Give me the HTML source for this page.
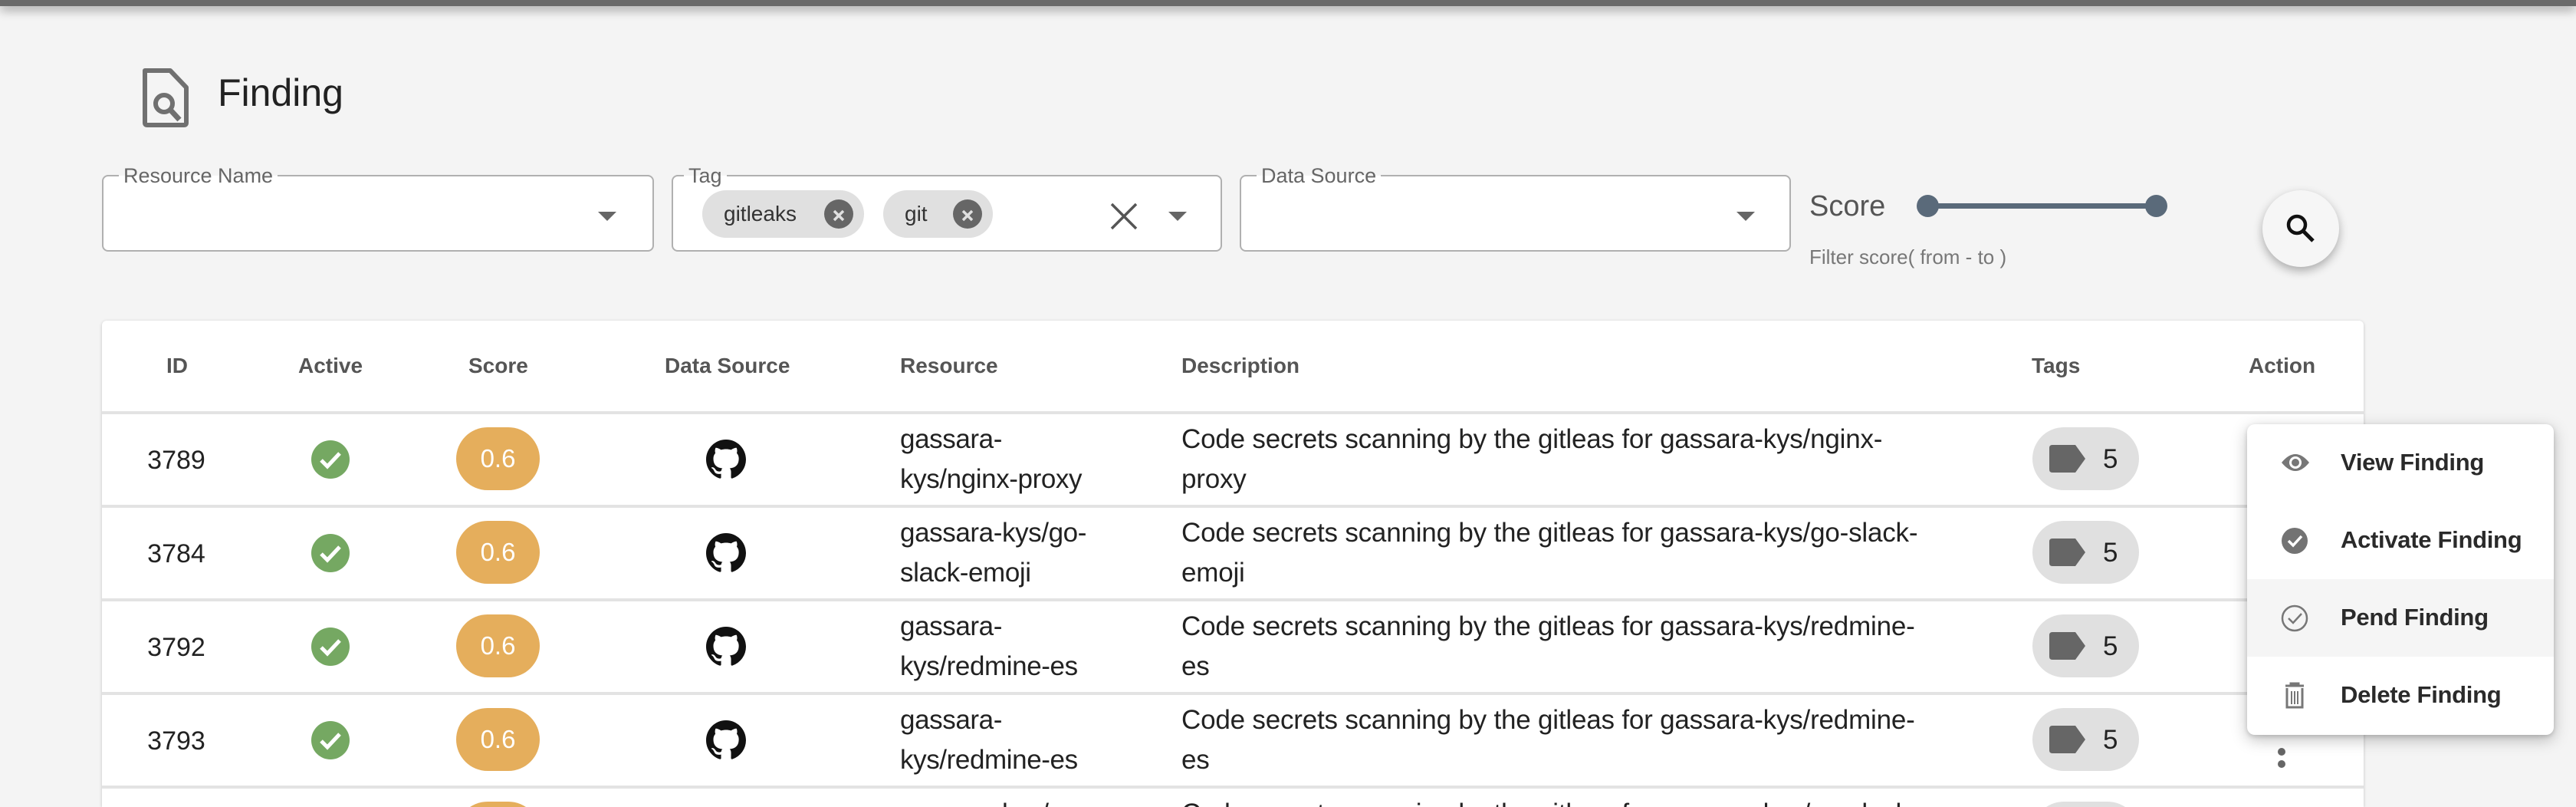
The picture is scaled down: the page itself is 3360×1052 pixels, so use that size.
<!DOCTYPE html>
<html style="width:3360px;height:1052px;overflow:hidden"><head><meta charset="utf-8"><style>
*{margin:0;padding:0;box-sizing:border-box}
body{width:3360px;height:1052px;overflow:hidden;background:#f4f4f4;font-family:"Liberation Sans",sans-serif;position:relative;color:#222}
.a{position:absolute}
.topbar{left:0;top:0;width:3360px;height:8px;background:#6a6a6a;box-shadow:0 4px 14px rgba(0,0,0,.45)}
.field{position:absolute;top:228px;height:100px;border:2px solid #b0b0b0;border-radius:8px;background:#fff}
.lbl{position:absolute;top:-17px;left:20px;background:linear-gradient(#f4f4f4 50%,#fff 50%);padding:0 6px;font-size:27px;color:#666;line-height:32px}
.arrow{position:absolute;width:0;height:0;border-left:12px solid transparent;border-right:12px solid transparent;border-top:12px solid #666}
.chip{position:absolute;top:18px;height:62px;border-radius:31px;background:#e0e0e0;font-size:28px;color:#333;line-height:62px;padding-left:28px}
.chip .x{position:absolute;right:14px;top:12px;width:38px;height:38px;border-radius:50%;background:#666}
.card{left:133px;top:418px;width:2950px;height:634px;background:#fff;box-shadow:0 1px 4px rgba(0,0,0,.2);border-radius:6px 6px 0 0;overflow:hidden}
.th{position:absolute;top:45px;font-size:28px;font-weight:bold;color:#555;line-height:1}
.hr{position:absolute;left:0;width:100%;height:4px;background:#e3e3e3}
.row{position:absolute;left:0;width:100%;height:122px}
.id{position:absolute;left:47px;width:100px;text-align:center;top:42px;font-size:34px;color:#222}
.chk{position:absolute;left:273px;top:35px;width:50px;height:50px}
.pill{position:absolute;left:462px;top:18px;width:109px;height:82px;border-radius:41px;background:#e5ae5c;color:#fff;font-size:33px;line-height:82px;text-align:center}
.gh{position:absolute;left:788px;top:34px;width:52px;height:52px}
.res,.desc{position:absolute;top:8px;font-size:35px;line-height:52px;color:#222;white-space:nowrap}
.res{left:1041px;letter-spacing:-.4px}.desc{left:1408px;letter-spacing:-.2px}
.tag{position:absolute;left:2518px;top:18px;width:139px;height:82px;border-radius:41px;background:#e0e0e0}
.tag svg{position:absolute;left:22px;top:23px}
.tag span{position:absolute;left:92px;top:22px;font-size:35px;color:#222}
.menu{left:2931px;top:553px;width:400px;height:405px;background:#fff;border-radius:10px;box-shadow:0 6px 20px rgba(0,0,0,.25),0 2px 6px rgba(0,0,0,.15)}
.mi{position:absolute;left:0;width:100%;height:101px}
.mi span{position:absolute;left:122px;top:32px;font-size:31px;font-weight:bold;color:#2a2a2a;letter-spacing:-.3px}
.mi svg{position:absolute;left:43px;top:32px}
</style></head><body>
<div class="a topbar"></div>

<svg class="a" style="left:184px;top:88px" width="64" height="78" viewBox="0 0 64 78"><path d="M5 4 H38 L59 26 V72 Q59 75 56 75 H8 Q5 75 5 72 Z" fill="none" stroke="#707070" stroke-width="6" stroke-linejoin="round"/><circle cx="30" cy="47" r="11" fill="none" stroke="#707070" stroke-width="6"/><path d="M38 55 L50 68" stroke="#707070" stroke-width="7"/></svg>
<div class="a" style="left:284px;top:92px;font-size:50px;color:#222">Finding</div>

<div class="field" style="left:133px;width:720px"><div class="lbl">Resource Name</div><div class="arrow" style="left:645px;top:46px"></div></div>
<div class="field" style="left:876px;width:718px"><div class="lbl" style="left:14px">Tag</div>
<div class="chip" style="left:38px;width:211px">gitleaks<div class="x"><svg width="38" height="38"><path d="M13 13L25 25M25 13L13 25" stroke="#e0e0e0" stroke-width="3.5"/></svg></div></div>
<div class="chip" style="left:274px;width:143px">git<div class="x"><svg width="38" height="38"><path d="M13 13L25 25M25 13L13 25" stroke="#e0e0e0" stroke-width="3.5"/></svg></div></div>
<svg style="position:absolute;left:569px;top:33px" width="38" height="38"><path d="M3 3L35 35M35 3L3 35" stroke="#555" stroke-width="3.5"/></svg>
<div class="arrow" style="left:646px;top:46px"></div></div>
<div class="field" style="left:1617px;width:719px"><div class="lbl">Data Source</div><div class="arrow" style="left:646px;top:46px"></div></div>

<div class="a" style="left:2360px;top:248px;font-size:38px;color:#555">Score</div>
<div class="a" style="left:2514px;top:265px;width:298px;height:7px;background:#5a6a7a"></div>
<div class="a" style="left:2500px;top:254px;width:29px;height:29px;border-radius:50%;background:#5a6a7a"></div>
<div class="a" style="left:2798px;top:254px;width:29px;height:29px;border-radius:50%;background:#5a6a7a"></div>
<div class="a" style="left:2360px;top:320px;font-size:26px;color:#777">Filter score( from - to )</div>
<div class="a" style="left:2951px;top:248px;width:100px;height:100px;border-radius:50%;background:#f6f6f6;box-shadow:0 5px 12px rgba(0,0,0,.3)"><svg style="position:absolute;left:30px;top:30px" width="40" height="40" viewBox="0 0 40 40"><circle cx="15" cy="15" r="11" fill="none" stroke="#111" stroke-width="4.5"/><path d="M23 23L36 36" stroke="#111" stroke-width="5"/></svg></div>

<div class="a card">
<div class="th" style="left:84px">ID</div>
<div class="th" style="left:256px">Active</div>
<div class="th" style="left:478px">Score</div>
<div class="th" style="left:734px">Data Source</div>
<div class="th" style="left:1041px">Resource</div>
<div class="th" style="left:1408px">Description</div>
<div class="th" style="left:2517px">Tags</div>
<div class="th" style="left:2800px">Action</div>
<div class="hr" style="top:118px"></div>

<div class="row" style="top:121px"><div class="id">3789</div><svg class="chk" viewBox="0 0 50 50"><circle cx="25" cy="25" r="25" fill="#75a862"/><path d="M13 26L21 34L37 17" fill="none" stroke="#fff" stroke-width="5"/></svg><div class="pill">0.6</div><svg class="gh" viewBox="0 0 16 16"><path fill="#111" d="M8 0C3.58 0 0 3.58 0 8c0 3.54 2.29 6.53 5.47 7.59.4.07.55-.17.55-.38 0-.19-.01-.82-.01-1.49-2.01.37-2.53-.49-2.69-.94-.09-.23-.48-.94-.82-1.13-.28-.15-.68-.52-.01-.53.63-.01 1.08.58 1.23.82.72 1.21 1.87.87 2.33.66.07-.52.28-.87.51-1.07-1.78-.2-3.64-.89-3.64-3.95 0-.87.31-1.59.82-2.15-.08-.2-.36-1.02.08-2.12 0 0 .67-.21 2.2.82.64-.18 1.32-.27 2-.27.68 0 1.36.09 2 .27 1.53-1.04 2.2-.82 2.2-.82.44 1.1.16 1.92.08 2.12.51.56.82 1.27.82 2.15 0 3.07-1.87 3.75-3.65 3.95.29.25.54.73.54 1.48 0 1.07-.01 1.93-.01 2.2 0 .21.15.46.55.38A8.013 8.013 0 0016 8c0-4.42-3.58-8-8-8z"/></svg><div class="res">gassara-<br>kys/nginx-proxy</div><div class="desc">Code secrets scanning by the gitleas for gassara-kys/nginx-<br>proxy</div><div class="tag"><svg width="48" height="36"><path d="M4 0H34L47 18L34 36H4Q0 36 0 32V4Q0 0 4 0Z" fill="#666"/></svg><span>5</span></div></div>
<div class="hr" style="top:240px"></div>

<div class="row" style="top:243px"><div class="id">3784</div><svg class="chk" viewBox="0 0 50 50"><circle cx="25" cy="25" r="25" fill="#75a862"/><path d="M13 26L21 34L37 17" fill="none" stroke="#fff" stroke-width="5"/></svg><div class="pill">0.6</div><svg class="gh" viewBox="0 0 16 16"><path fill="#111" d="M8 0C3.58 0 0 3.58 0 8c0 3.54 2.29 6.53 5.47 7.59.4.07.55-.17.55-.38 0-.19-.01-.82-.01-1.49-2.01.37-2.53-.49-2.69-.94-.09-.23-.48-.94-.82-1.13-.28-.15-.68-.52-.01-.53.63-.01 1.08.58 1.23.82.72 1.21 1.87.87 2.33.66.07-.52.28-.87.51-1.07-1.78-.2-3.64-.89-3.64-3.95 0-.87.31-1.59.82-2.15-.08-.2-.36-1.02.08-2.12 0 0 .67-.21 2.2.82.64-.18 1.32-.27 2-.27.68 0 1.36.09 2 .27 1.53-1.04 2.2-.82 2.2-.82.44 1.1.16 1.92.08 2.12.51.56.82 1.27.82 2.15 0 3.07-1.87 3.75-3.65 3.95.29.25.54.73.54 1.48 0 1.07-.01 1.93-.01 2.2 0 .21.15.46.55.38A8.013 8.013 0 0016 8c0-4.42-3.58-8-8-8z"/></svg><div class="res">gassara-kys/go-<br>slack-emoji</div><div class="desc">Code secrets scanning by the gitleas for gassara-kys/go-slack-<br>emoji</div><div class="tag"><svg width="48" height="36"><path d="M4 0H34L47 18L34 36H4Q0 36 0 32V4Q0 0 4 0Z" fill="#666"/></svg><span>5</span></div></div>
<div class="hr" style="top:362px"></div>

<div class="row" style="top:365px"><div class="id">3792</div><svg class="chk" viewBox="0 0 50 50"><circle cx="25" cy="25" r="25" fill="#75a862"/><path d="M13 26L21 34L37 17" fill="none" stroke="#fff" stroke-width="5"/></svg><div class="pill">0.6</div><svg class="gh" viewBox="0 0 16 16"><path fill="#111" d="M8 0C3.58 0 0 3.58 0 8c0 3.54 2.29 6.53 5.47 7.59.4.07.55-.17.55-.38 0-.19-.01-.82-.01-1.49-2.01.37-2.53-.49-2.69-.94-.09-.23-.48-.94-.82-1.13-.28-.15-.68-.52-.01-.53.63-.01 1.08.58 1.23.82.72 1.21 1.87.87 2.33.66.07-.52.28-.87.51-1.07-1.78-.2-3.64-.89-3.64-3.95 0-.87.31-1.59.82-2.15-.08-.2-.36-1.02.08-2.12 0 0 .67-.21 2.2.82.64-.18 1.32-.27 2-.27.68 0 1.36.09 2 .27 1.53-1.04 2.2-.82 2.2-.82.44 1.1.16 1.92.08 2.12.51.56.82 1.27.82 2.15 0 3.07-1.87 3.75-3.65 3.95.29.25.54.73.54 1.48 0 1.07-.01 1.93-.01 2.2 0 .21.15.46.55.38A8.013 8.013 0 0016 8c0-4.42-3.58-8-8-8z"/></svg><div class="res">gassara-<br>kys/redmine-es</div><div class="desc">Code secrets scanning by the gitleas for gassara-kys/redmine-<br>es</div><div class="tag"><svg width="48" height="36"><path d="M4 0H34L47 18L34 36H4Q0 36 0 32V4Q0 0 4 0Z" fill="#666"/></svg><span>5</span></div></div>
<div class="hr" style="top:484px"></div>

<div class="row" style="top:487px"><div class="id">3793</div><svg class="chk" viewBox="0 0 50 50"><circle cx="25" cy="25" r="25" fill="#75a862"/><path d="M13 26L21 34L37 17" fill="none" stroke="#fff" stroke-width="5"/></svg><div class="pill">0.6</div><svg class="gh" viewBox="0 0 16 16"><path fill="#111" d="M8 0C3.58 0 0 3.58 0 8c0 3.54 2.29 6.53 5.47 7.59.4.07.55-.17.55-.38 0-.19-.01-.82-.01-1.49-2.01.37-2.53-.49-2.69-.94-.09-.23-.48-.94-.82-1.13-.28-.15-.68-.52-.01-.53.63-.01 1.08.58 1.23.82.72 1.21 1.87.87 2.33.66.07-.52.28-.87.51-1.07-1.78-.2-3.64-.89-3.64-3.95 0-.87.31-1.59.82-2.15-.08-.2-.36-1.02.08-2.12 0 0 .67-.21 2.2.82.64-.18 1.32-.27 2-.27.68 0 1.36.09 2 .27 1.53-1.04 2.2-.82 2.2-.82.44 1.1.16 1.92.08 2.12.51.56.82 1.27.82 2.15 0 3.07-1.87 3.75-3.65 3.95.29.25.54.73.54 1.48 0 1.07-.01 1.93-.01 2.2 0 .21.15.46.55.38A8.013 8.013 0 0016 8c0-4.42-3.58-8-8-8z"/></svg><div class="res">gassara-<br>kys/redmine-es</div><div class="desc">Code secrets scanning by the gitleas for gassara-kys/redmine-<br>es</div><div class="tag"><svg width="48" height="36"><path d="M4 0H34L47 18L34 36H4Q0 36 0 32V4Q0 0 4 0Z" fill="#666"/></svg><span>5</span></div>
<div style="position:absolute;left:2838px;top:70px;width:10px;height:10px;border-radius:50%;background:#666"></div>
<div style="position:absolute;left:2838px;top:86px;width:10px;height:10px;border-radius:50%;background:#666"></div></div>
<div class="hr" style="top:606px"></div>

<div class="row" style="top:609px"><div class="pill">0.6</div><div class="res" style="top:8px">gassara-kys/go-</div><div class="desc" style="top:8px">Code secrets scanning by the gitleas for gassara-kys/go-slack-</div><div class="tag"></div></div>
</div>

<div class="a menu">
<div class="mi" style="top:0"><svg width="40" height="36" viewBox="0 0 40 36"><path d="M2 18Q20 -4 38 18Q20 40 2 18Z" fill="#777"/><circle cx="20" cy="18" r="8" fill="#fff"/><circle cx="20" cy="18" r="5" fill="#777"/></svg><span>View Finding</span></div>
<div class="mi" style="top:101px"><svg width="38" height="38" viewBox="0 0 38 38"><circle cx="19" cy="19" r="17" fill="#737373"/><path d="M11 19L17 25L28 13" fill="none" stroke="#fff" stroke-width="3.5"/></svg><span>Activate Finding</span></div>
<div class="mi" style="top:202px;background:#f5f5f5"><svg width="38" height="38" viewBox="0 0 38 38"><circle cx="19" cy="19" r="16" fill="none" stroke="#777" stroke-width="2.5"/><path d="M11 19L17 25L28 13" fill="none" stroke="#777" stroke-width="2.5"/></svg><span>Pend Finding</span></div>
<div class="mi" style="top:303px"><svg width="38" height="38" viewBox="0 0 38 38"><path d="M7 6H31M14 6V3H24V6M9 9V34H29V9" fill="none" stroke="#777" stroke-width="3"/><path d="M15 13V30M19 13V30M23 13V30" stroke="#777" stroke-width="2"/></svg><span>Delete Finding</span></div>
</div>
</body></html>
